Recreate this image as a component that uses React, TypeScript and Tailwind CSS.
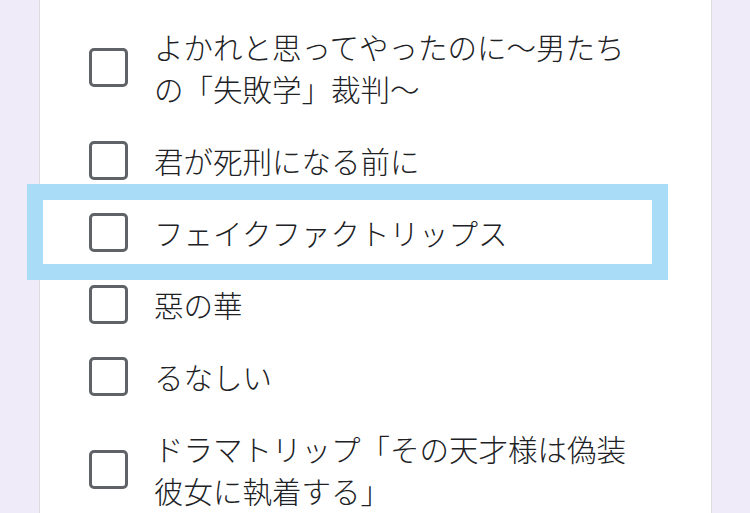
const options = [
  { label: "よかれと思ってやったのに〜男たちの「失敗学」裁判〜" },
  { label: "君が死刑になる前に" },
  { label: "フェイクファクトリップス", focused: true },
  { label: "惡の華" },
  { label: "るなしい" },
  { label: "ドラマトリップ「その天才様は偽装彼女に執着する」" },
];

const App = () => {
  return (
    <div className="h-[513px] w-[750px] overflow-hidden bg-[#f0ebf8] font-['Noto_Sans_CJK_JP','Noto_Sans',sans-serif]">
      <div className="ml-[39px] h-full w-[673px] border-x border-[#dadce0] bg-white pt-[10px]">
        {options.map((option) => (
          <div key={option.label} className="relative flex items-center py-[15px] pl-[49px]">
            {option.focused && (
              <div className="pointer-events-none absolute -top-[12px] -bottom-[12px] -left-[13px] right-[43px] border-[16px] border-[#a9dcf7]" />
            )}
            <div className="h-[39px] w-[39px] shrink-0 rounded-[5px] border-[3px] border-[#5f6368]" />
            <p className="ml-[26px] w-[484px] text-[29.5px] font-light leading-[42px] text-[#202124] [text-spacing-trim:space-all]">
              {option.label}
            </p>
          </div>
        ))}
      </div>
    </div>
  );
};

export default App;
